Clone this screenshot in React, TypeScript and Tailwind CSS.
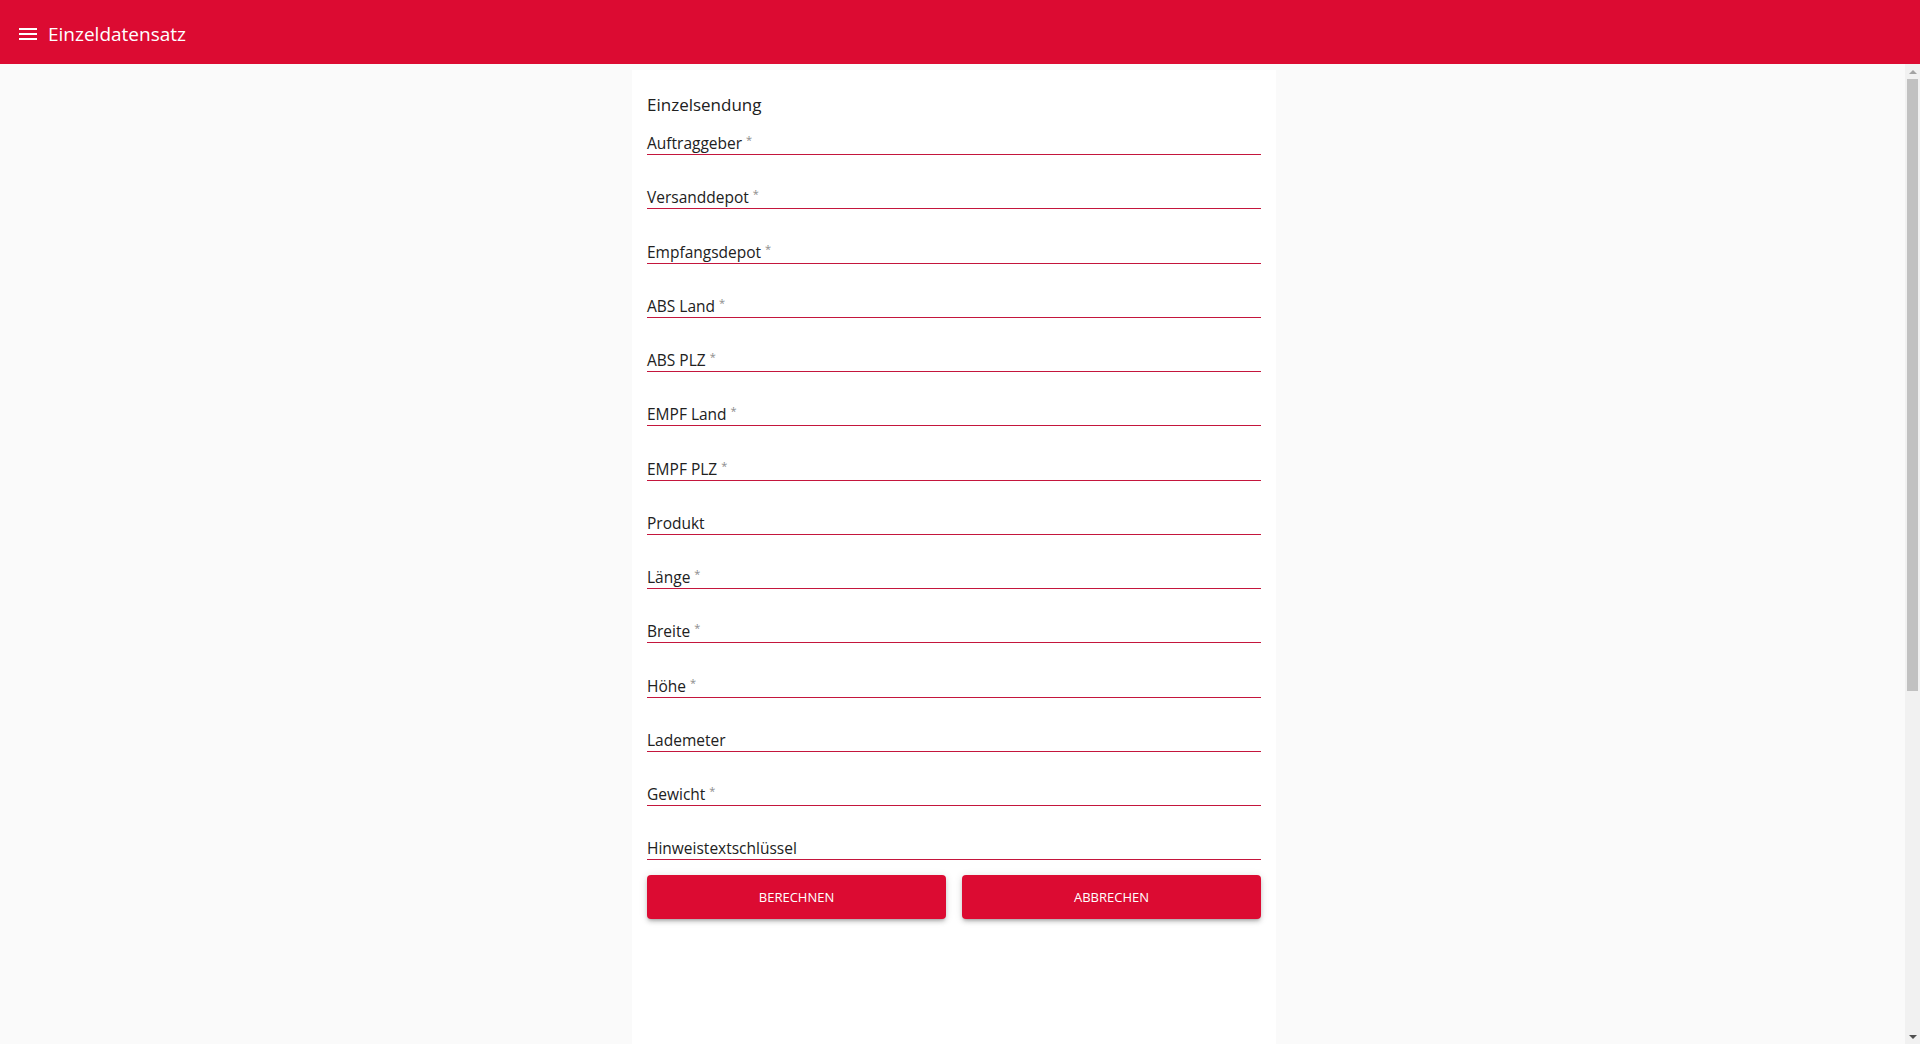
import React from "react";

const FIELDS: { label: string; required: boolean }[] = [
  { label: "Auftraggeber", required: true },
  { label: "Versanddepot", required: true },
  { label: "Empfangsdepot", required: true },
  { label: "ABS Land", required: true },
  { label: "ABS PLZ", required: true },
  { label: "EMPF Land", required: true },
  { label: "EMPF PLZ", required: true },
  { label: "Produkt", required: false },
  { label: "Länge", required: true },
  { label: "Breite", required: true },
  { label: "Höhe", required: true },
  { label: "Lademeter", required: false },
  { label: "Gewicht", required: true },
  { label: "Hinweistextschlüssel", required: false },
];

const MenuIcon = () => (
  <svg width="24" height="24" viewBox="0 0 24 24" fill="#ffffff">
    <path d="M3 18h18v-2H3v2zm0-5h18v-2H3v2zm0-7v2h18V6H3z" />
  </svg>
);

const Field = ({ label, required }: { label: string; required: boolean }) => (
  <div className="pt-[32.25px] first:pt-[16px]">
    <div className="border-b border-[#c4163d] pb-[1px]">
      <label className="block h-[20px] text-[15.5px] leading-[20px] text-[#212121]">
        {label}
        {required && (
          <span className="ml-[4px] align-top text-[11px] leading-[14px] text-[#8c8c8c]">*</span>
        )}
      </label>
    </div>
  </div>
);

// classic scrollbar look, the headless browser hides the real one
const ScrollBar = () => (
  <aside className="flex w-[15px] shrink-0 flex-col bg-[#f1f1f1]">
    <div className="flex h-[15px] items-center justify-center">
      <svg width="8" height="4" viewBox="0 0 8 4">
        <path d="M0 4L4 0L8 4Z" fill="#a3a3a3" />
      </svg>
    </div>
    <div className="flex-1 px-[2px]">
      <div className="h-[612px] bg-[#c1c1c1]" />
    </div>
    <div className="flex h-[15px] items-center justify-center">
      <svg width="8" height="4" viewBox="0 0 8 4">
        <path d="M0 0L4 4L8 0Z" fill="#505050" />
      </svg>
    </div>
  </aside>
);

export default function App() {
  return (
    <div
      className="flex h-screen flex-col bg-[#fafafa]"
      style={{ fontFamily: '"Open Sans", "Noto Sans", sans-serif' }}
    >
      {/* Toolbar */}
      <header className="flex h-[64px] shrink-0 items-center bg-[#dc0b32] pl-[16px] pt-[4px] text-white">
        <MenuIcon />
        <span className="ml-[8px] text-[19px] leading-[24px]">Einzeldatensatz</span>
      </header>

      <main className="flex min-h-0 flex-1">
        <div className="min-w-0 flex-1 overflow-hidden pl-[3px]">
          <div className="mx-auto mt-[6px] h-[1510px] w-[644px] bg-white px-[15px] pt-[23px]">
            <h2 className="h-[24px] text-[17px] leading-[24px] text-[#212121]">Einzelsendung</h2>

            <form className="flex flex-col">
              {FIELDS.map((f) => (
                <Field key={f.label} label={f.label} required={f.required} />
              ))}
            </form>

            <div className="mt-[15px] flex gap-[16px]">
              <button className="h-[44px] flex-1 rounded-[4px] bg-[#dc0b32] text-[13px] text-white shadow-[0_3px_3px_-2px_rgba(0,0,0,0.2),0_3px_4px_0_rgba(0,0,0,0.14),0_1px_8px_0_rgba(0,0,0,0.12)]">
                BERECHNEN
              </button>
              <button className="h-[44px] flex-1 rounded-[4px] bg-[#dc0b32] text-[13px] text-white shadow-[0_3px_3px_-2px_rgba(0,0,0,0.2),0_3px_4px_0_rgba(0,0,0,0.14),0_1px_8px_0_rgba(0,0,0,0.12)]">
                ABBRECHEN
              </button>
            </div>
          </div>
        </div>
        <ScrollBar />
      </main>
    </div>
  );
}
